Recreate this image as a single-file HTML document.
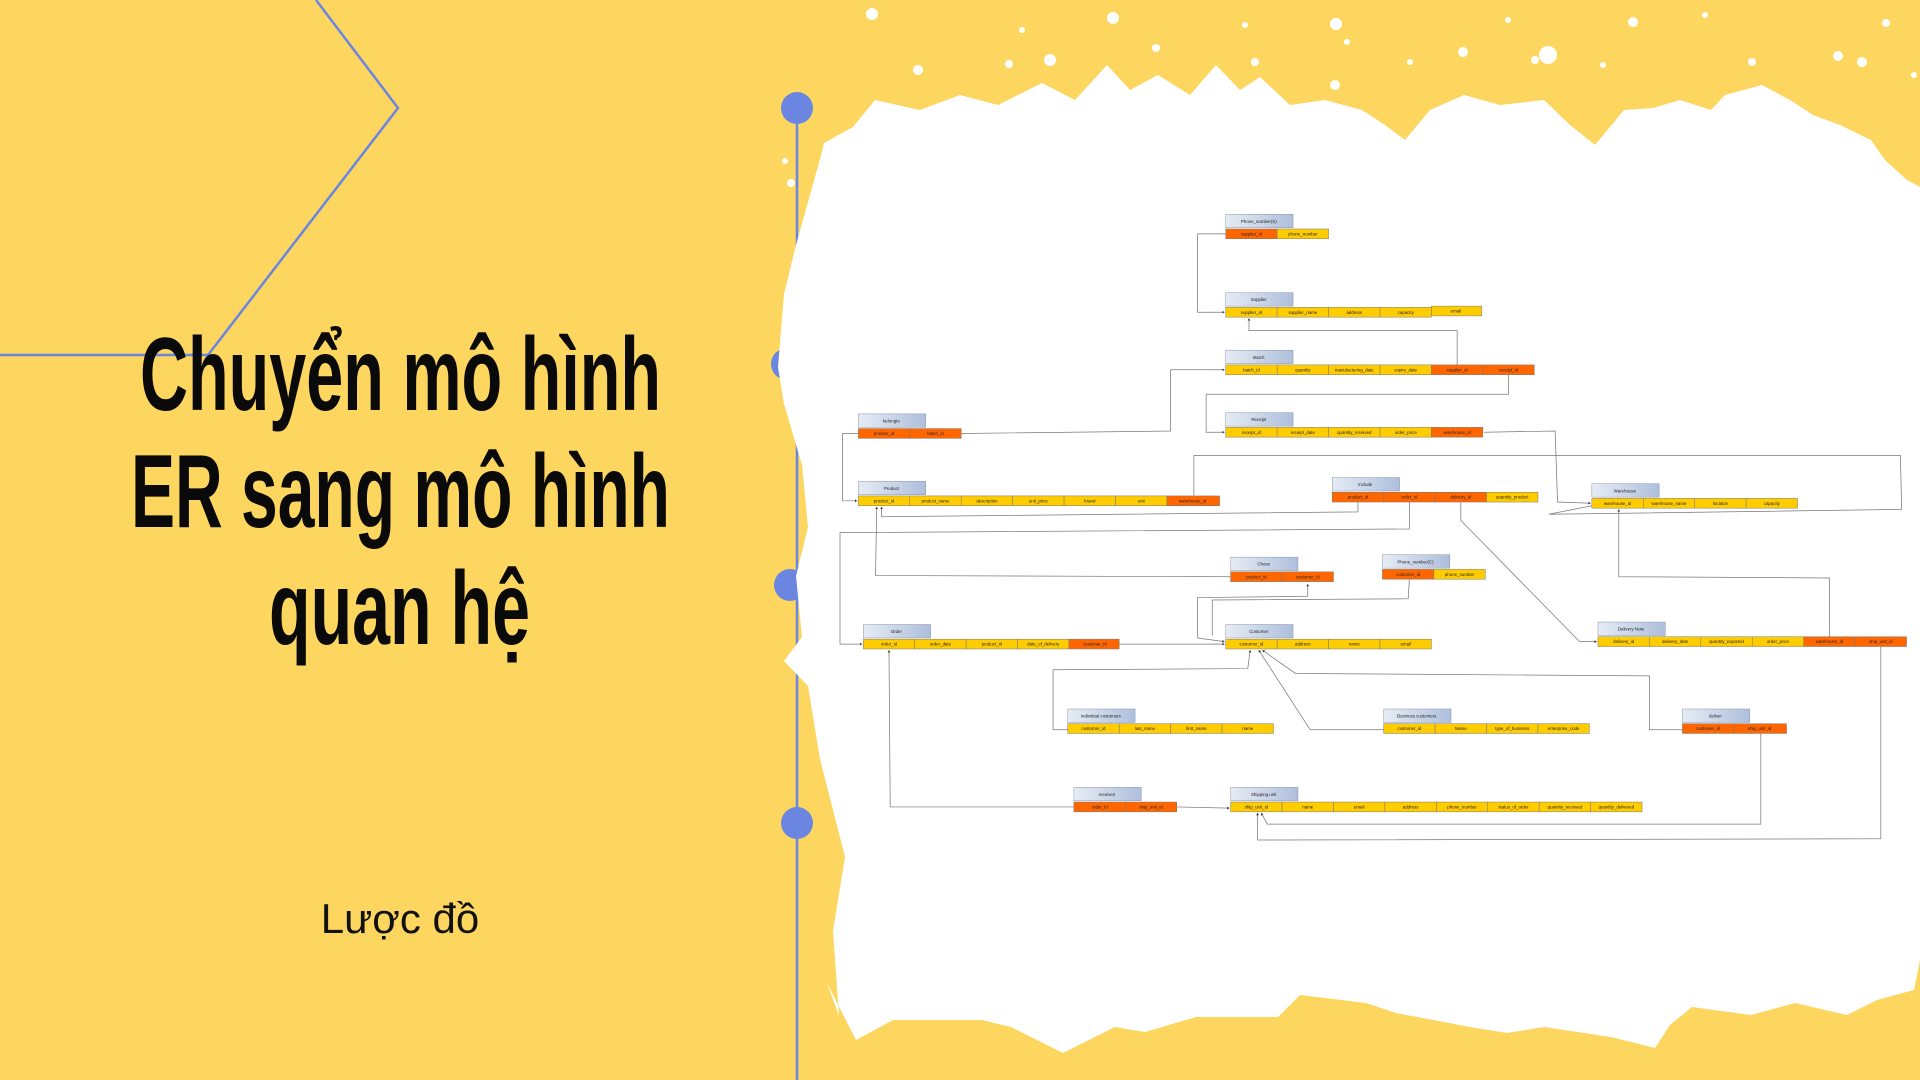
<!DOCTYPE html>
<html><head><meta charset="utf-8"><style>
html,body{margin:0;padding:0;width:1920px;height:1080px;overflow:hidden;background:#FDD660}
svg{display:block}
.t{font-family:"Liberation Sans",sans-serif;font-size:3.6px;fill:#222;text-anchor:middle}
.y{fill:#FFCC00;stroke:#777;stroke-width:.4}
.o{fill:#FF6600;stroke:#777;stroke-width:.4}
.h{fill:url(#g);stroke:#8a94a8;stroke-width:.4}
.l{fill:none;stroke:#777;stroke-width:.6}
</style></head><body>
<svg width="1920" height="1080" viewBox="0 0 1920 1080" xmlns="http://www.w3.org/2000/svg">
<defs>
<linearGradient id="g" x1="0" x2="1"><stop offset="0" stop-color="#e6ecf5"/><stop offset="1" stop-color="#aebfdc"/></linearGradient>
<marker id="a" markerWidth="4" markerHeight="4" refX="3" refY="2" orient="auto"><path d="M0,0 L3,2 L0,4z" fill="#333"/></marker>
</defs>
<rect width="1920" height="1080" fill="#FDD660"/>
<!-- blue decorations -->
<polyline points="316,0 398,108 208,355 0,355" fill="none" stroke="#6B86E0" stroke-width="2.5"/>
<line x1="797" y1="108" x2="797" y2="1080" stroke="#6B86E0" stroke-width="2.5"/>
<circle cx="797" cy="108" r="16" fill="#6B86E0"/>
<circle cx="787" cy="364" r="16" fill="#6B86E0"/>
<circle cx="790" cy="585" r="16" fill="#6B86E0"/>
<circle cx="797" cy="823" r="16" fill="#6B86E0"/>
<!-- white blob -->
<path fill="#fff" d="M824,143 L853,127 L875,100 L920,110 L960,95 L998,105 L1042,83 L1075,100 L1107,65 L1130,90 L1158,75 L1190,95 L1216,65 L1240,90 L1260,77 L1290,105 L1325,100 L1362,110 L1385,125 L1405,140 L1430,110 L1464,95 L1500,105 L1544,100 L1570,125 L1595,145 L1624,110 L1653,108 L1680,100 L1711,110 L1725,95 L1762,85 L1790,100 L1813,115 L1840,125 L1871,140 L1885,160 L1907,180 L1920,187 L1920,960 L1914,990 L1877,1000 L1847,1015 L1795,1003 L1751,1015 L1692,1007 L1670,1025 L1655,1048 L1611,1037 L1544,1027 L1507,1033 L1470,1027 L1396,1013 L1366,1003 L1300,995 L1278,1017 L1196,1017 L1145,1032 L1115,1027 L1063,1053 L1011,1027 L982,1020 L893,1020 L856,1040 L827,983 L839,1016 L833,931 L845,857 L820,759 L808,686 L784,661 L802,637 L796,576 L808,527 L802,465 L784,404 L778,367 L784,294 L796,245 L820,159 Z"/>
<g fill="#fff">
<circle cx="872" cy="14" r="6"/><circle cx="1113" cy="18" r="6"/><circle cx="1336" cy="24" r="6"/><circle cx="1633" cy="22" r="5"/><circle cx="1838" cy="56" r="5"/><circle cx="1886" cy="23" r="4"/>
<circle cx="1022" cy="30" r="3"/><circle cx="1009" cy="64" r="4"/><circle cx="1255" cy="62" r="4"/><circle cx="1335" cy="85" r="5"/><circle cx="1463" cy="52" r="5"/><circle cx="1535" cy="60" r="4"/><circle cx="1603" cy="65" r="3"/><circle cx="1752" cy="62" r="4"/>
<circle cx="1347" cy="42" r="3"/><circle cx="918" cy="70" r="5"/><circle cx="965" cy="110" r="5"/><circle cx="1050" cy="60" r="6"/><circle cx="1156" cy="48" r="4"/><circle cx="1245" cy="25" r="3"/><circle cx="1508" cy="20" r="3"/><circle cx="1705" cy="15" r="3"/><circle cx="1914" cy="75" r="3"/>
<circle cx="1548" cy="55" r="9"/><circle cx="1410" cy="62" r="3"/><circle cx="1862" cy="62" r="5"/><circle cx="791" cy="183" r="4"/><circle cx="785" cy="161" r="3"/>
</g>
<!-- title -->
<g font-family="'Liberation Sans Narrow','Liberation Sans',sans-serif" font-weight="bold" fill="#0a0a0a" font-size="104">
<text x="140" y="410" textLength="521" lengthAdjust="spacingAndGlyphs">Chuyển mô hình</text>
<text x="131" y="527" textLength="539" lengthAdjust="spacingAndGlyphs">ER sang mô hình</text>
<text x="269" y="644" textLength="261" lengthAdjust="spacingAndGlyphs">quan hệ</text>
</g>
<text x="400" y="933" text-anchor="middle" font-family="'Liberation Sans',sans-serif" font-size="42" fill="#111">Lược đồ</text>
<!-- diagram -->
<g transform="scale(1.22449)">
<g class="lines">
<polyline class="l" points="1001,191 978,191 978,255 1000,255" marker-end="url(#a)"/>
<polyline class="l" points="1190,306 1190,270 1020,270 1020,260" marker-end="url(#a)"/>
<polyline class="l" points="1232,306 1232,322 985,322 985,353 1000,353" marker-end="url(#a)"/>
<polyline class="l" points="785,354 956,352 956,302 1000,302" marker-end="url(#a)"/>
<polyline class="l" points="701,354 688,354 688,409 700,409" marker-end="url(#a)"/>
<polyline class="l" points="1212,353 1270,352 1272,410 1299,411" marker-end="url(#a)"/>
<polyline class="l" points="975,405 975,372 1552,372 1553,416 1265,420 1300,413"/>
<polyline class="l" points="1109,410 1109,418 720,422 720,414" marker-end="url(#a)"/>
<polyline class="l" points="1151,410 1151,432 686,435 686,526 704,526" marker-end="url(#a)"/>
<polyline class="l" points="1193,410 1193,425 1290,524 1304,524" marker-end="url(#a)"/>
<polyline class="l" points="1005,471 715,470 716,414" marker-end="url(#a)"/>
<polyline class="l" points="990,519 990,490 1150,489 1151,473"/>
<polyline class="l" points="978,521 978,488 1068,487 1068,477" marker-end="url(#a)"/>
<line class="l" x1="978" y1="521" x2="1000" y2="524" marker-end="url(#a)"/>
<polyline class="l" points="914,526 1000,526" marker-end="url(#a)"/>
<polyline class="l" points="872,596 860,596 860,547 1019,546 1021,531" marker-end="url(#a)"/>
<polyline class="l" points="1130,596 1070,596 1028,531" marker-end="url(#a)"/>
<polyline class="l" points="1374,596 1347,596 1347,552 1058,550 1031,531" marker-end="url(#a)"/>
<polyline class="l" points="877,659 727,659 726,531" marker-end="url(#a)"/>
<polyline class="l" points="961,659 1004,660" marker-end="url(#a)"/>
<polyline class="l" points="1438,599 1438,673 1035,673 1030,664" marker-end="url(#a)"/>
<polyline class="l" points="1536,528 1536,685 1027,686 1027,664" marker-end="url(#a)"/>
<polyline class="l" points="1494,520 1494,472 1322,471 1322,416" marker-end="url(#a)"/>
</g>
<!-- tables -->
<g transform="translate(1001,187)"><rect class="h" x="0" y="-12" width="55" height="11"/><text class="t" x="27" y="-5">Phone_number(S)</text>
<rect class="o" x="0" width="42" height="8"/><text class="t" x="21" y="5.3">supplier_id</text>
<rect class="y" x="42" width="42" height="8"/><text class="t" x="63" y="5.3">phone_number</text></g>

<g transform="translate(1001,251)"><rect class="h" x="0" y="-12" width="55" height="11"/><text class="t" x="27" y="-5">Supplier</text>
<rect class="y" x="0" width="42" height="8"/><text class="t" x="21" y="5.3">supplier_id</text>
<rect class="y" x="42" width="42" height="8"/><text class="t" x="63" y="5.3">supplier_name</text>
<rect class="y" x="84" width="42" height="8"/><text class="t" x="105" y="5.3">address</text>
<rect class="y" x="126" width="42" height="8"/><text class="t" x="147" y="5.3">capacity</text>
<rect class="y" x="168" y="-1" width="41" height="8"/><text class="t" x="188" y="4.3">email</text></g>

<g transform="translate(1001,298)"><rect class="h" x="0" y="-12" width="55" height="11"/><text class="t" x="27" y="-5">Batch</text>
<rect class="y" x="0" width="42" height="8"/><text class="t" x="21" y="5.3">batch_id</text>
<rect class="y" x="42" width="42" height="8"/><text class="t" x="63" y="5.3">quantity</text>
<rect class="y" x="84" width="42" height="8"/><text class="t" x="105" y="5.3">manufacturing_date</text>
<rect class="y" x="126" width="42" height="8"/><text class="t" x="147" y="5.3">expiry_date</text>
<rect class="o" x="168" width="42" height="8"/><text class="t" x="189" y="5.3">supplier_id</text>
<rect class="o" x="210" width="42" height="8"/><text class="t" x="231" y="5.3">receipt_id</text></g>

<g transform="translate(1001,349)"><rect class="h" x="0" y="-12" width="55" height="11"/><text class="t" x="27" y="-5">Receipt</text>
<rect class="y" x="0" width="42" height="8"/><text class="t" x="21" y="5.3">receipt_id</text>
<rect class="y" x="42" width="42" height="8"/><text class="t" x="63" y="5.3">receipt_date</text>
<rect class="y" x="84" width="42" height="8"/><text class="t" x="105" y="5.3">quantity_received</text>
<rect class="y" x="126" width="42" height="8"/><text class="t" x="147" y="5.3">order_price</text>
<rect class="o" x="168" width="42" height="8"/><text class="t" x="189" y="5.3">warehouse_id</text></g>

<g transform="translate(701,350)"><rect class="h" x="0" y="-12" width="55" height="11"/><text class="t" x="27" y="-5">belongto</text>
<rect class="o" x="0" width="42" height="8"/><text class="t" x="21" y="5.3">product_id</text>
<rect class="o" x="42" width="42" height="8"/><text class="t" x="63" y="5.3">batch_id</text></g>

<g transform="translate(701,405)"><rect class="h" x="0" y="-12" width="55" height="11"/><text class="t" x="27" y="-5">Product</text>
<rect class="y" x="0" width="42" height="8"/><text class="t" x="21" y="5.3">product_id</text>
<rect class="y" x="42" width="42" height="8"/><text class="t" x="63" y="5.3">product_name</text>
<rect class="y" x="84" width="42" height="8"/><text class="t" x="105" y="5.3">description</text>
<rect class="y" x="126" width="42" height="8"/><text class="t" x="147" y="5.3">unit_price</text>
<rect class="y" x="168" width="42" height="8"/><text class="t" x="189" y="5.3">brand</text>
<rect class="y" x="210" width="42" height="8"/><text class="t" x="231" y="5.3">unit</text>
<rect class="o" x="252" width="43" height="8"/><text class="t" x="273" y="5.3">warehouse_id</text></g>

<g transform="translate(1088,402)"><rect class="h" x="0" y="-12" width="55" height="11"/><text class="t" x="27" y="-5">Include</text>
<rect class="o" x="0" width="42" height="8"/><text class="t" x="21" y="5.3">product_id</text>
<rect class="o" x="42" width="42" height="8"/><text class="t" x="63" y="5.3">order_id</text>
<rect class="o" x="84" width="42" height="8"/><text class="t" x="105" y="5.3">delivery_id</text>
<rect class="y" x="126" width="42" height="8"/><text class="t" x="147" y="5.3">quantity_product</text></g>

<g transform="translate(1300,407)"><rect class="h" x="0" y="-12" width="55" height="11"/><text class="t" x="27" y="-5">Warehouse</text>
<rect class="y" x="0" width="42" height="8"/><text class="t" x="21" y="5.3">warehouse_id</text>
<rect class="y" x="42" width="42" height="8"/><text class="t" x="63" y="5.3">warehouse_name</text>
<rect class="y" x="84" width="42" height="8"/><text class="t" x="105" y="5.3">location</text>
<rect class="y" x="126" width="42" height="8"/><text class="t" x="147" y="5.3">capacity</text></g>

<g transform="translate(1005,467)"><rect class="h" x="0" y="-12" width="55" height="11"/><text class="t" x="27" y="-5">Chose</text>
<rect class="o" x="0" width="42" height="8"/><text class="t" x="21" y="5.3">product_id</text>
<rect class="o" x="42" width="42" height="8"/><text class="t" x="63" y="5.3">customer_id</text></g>

<g transform="translate(1129,465)"><rect class="h" x="0" y="-12" width="55" height="11"/><text class="t" x="27" y="-5">Phone_number(C)</text>
<rect class="o" x="0" width="42" height="8"/><text class="t" x="21" y="5.3">customer_id</text>
<rect class="y" x="42" width="42" height="8"/><text class="t" x="63" y="5.3">phone_number</text></g>

<g transform="translate(705,522)"><rect class="h" x="0" y="-12" width="55" height="11"/><text class="t" x="27" y="-5">Order</text>
<rect class="y" x="0" width="42" height="8"/><text class="t" x="21" y="5.3">order_id</text>
<rect class="y" x="42" width="42" height="8"/><text class="t" x="63" y="5.3">order_date</text>
<rect class="y" x="84" width="42" height="8"/><text class="t" x="105" y="5.3">product_id</text>
<rect class="y" x="126" width="42" height="8"/><text class="t" x="147" y="5.3">date_of_delivery</text>
<rect class="o" x="168" width="41" height="8"/><text class="t" x="189" y="5.3">customer_id</text></g>

<g transform="translate(1001,522)"><rect class="h" x="0" y="-12" width="55" height="11"/><text class="t" x="27" y="-5">Customer</text>
<rect class="y" x="0" width="42" height="8"/><text class="t" x="21" y="5.3">customer_id</text>
<rect class="y" x="42" width="42" height="8"/><text class="t" x="63" y="5.3">address</text>
<rect class="y" x="84" width="42" height="8"/><text class="t" x="105" y="5.3">name</text>
<rect class="y" x="126" width="42" height="8"/><text class="t" x="147" y="5.3">email</text></g>

<g transform="translate(1305,520)"><rect class="h" x="0" y="-12" width="55" height="11"/><text class="t" x="27" y="-5">Delivery Note</text>
<rect class="y" x="0" width="42" height="8"/><text class="t" x="21" y="5.3">delivery_id</text>
<rect class="y" x="42" width="42" height="8"/><text class="t" x="63" y="5.3">delivery_date</text>
<rect class="y" x="84" width="42" height="8"/><text class="t" x="105" y="5.3">quantity_exported</text>
<rect class="y" x="126" width="42" height="8"/><text class="t" x="147" y="5.3">order_price</text>
<rect class="o" x="168" width="42" height="8"/><text class="t" x="189" y="5.3">warehouse_id</text>
<rect class="o" x="210" width="42" height="8"/><text class="t" x="231" y="5.3">ship_unit_id</text></g>

<g transform="translate(872,591)"><rect class="h" x="0" y="-12" width="55" height="11"/><text class="t" x="27" y="-5">Individual customers</text>
<rect class="y" x="0" width="42" height="8"/><text class="t" x="21" y="5.3">customer_id</text>
<rect class="y" x="42" width="42" height="8"/><text class="t" x="63" y="5.3">last_name</text>
<rect class="y" x="84" width="42" height="8"/><text class="t" x="105" y="5.3">first_name</text>
<rect class="y" x="126" width="42" height="8"/><text class="t" x="147" y="5.3">name</text></g>

<g transform="translate(1130,591)"><rect class="h" x="0" y="-12" width="55" height="11"/><text class="t" x="27" y="-5">Business customers</text>
<rect class="y" x="0" width="42" height="8"/><text class="t" x="21" y="5.3">customer_id</text>
<rect class="y" x="42" width="42" height="8"/><text class="t" x="63" y="5.3">Name</text>
<rect class="y" x="84" width="42" height="8"/><text class="t" x="105" y="5.3">type_of_business</text>
<rect class="y" x="126" width="42" height="8"/><text class="t" x="147" y="5.3">enterprise_code</text></g>

<g transform="translate(1374,591)"><rect class="h" x="0" y="-12" width="55" height="11"/><text class="t" x="27" y="-5">deliver</text>
<rect class="o" x="0" width="42" height="8"/><text class="t" x="21" y="5.3">customer_id</text>
<rect class="o" x="42" width="43" height="8"/><text class="t" x="63" y="5.3">ship_unit_id</text></g>

<g transform="translate(877,655)"><rect class="h" x="0" y="-12" width="55" height="11"/><text class="t" x="27" y="-5">receive2</text>
<rect class="o" x="0" width="42" height="8"/><text class="t" x="21" y="5.3">order_id</text>
<rect class="o" x="42" width="42" height="8"/><text class="t" x="63" y="5.3">ship_unit_id</text></g>

<g transform="translate(1005,655)"><rect class="h" x="0" y="-12" width="55" height="11"/><text class="t" x="27" y="-5">Shipping unit</text>
<rect class="y" x="0" width="42" height="8"/><text class="t" x="21" y="5.3">ship_unit_id</text>
<rect class="y" x="42" width="42" height="8"/><text class="t" x="63" y="5.3">name</text>
<rect class="y" x="84" width="42" height="8"/><text class="t" x="105" y="5.3">email</text>
<rect class="y" x="126" width="42" height="8"/><text class="t" x="147" y="5.3">address</text>
<rect class="y" x="168" width="42" height="8"/><text class="t" x="189" y="5.3">phone_number</text>
<rect class="y" x="210" width="42" height="8"/><text class="t" x="231" y="5.3">status_of_order</text>
<rect class="y" x="252" width="42" height="8"/><text class="t" x="273" y="5.3">quantity_received</text>
<rect class="y" x="294" width="42" height="8"/><text class="t" x="315" y="5.3">quantity_delivered</text></g>
</g>
</svg>
</body></html>
